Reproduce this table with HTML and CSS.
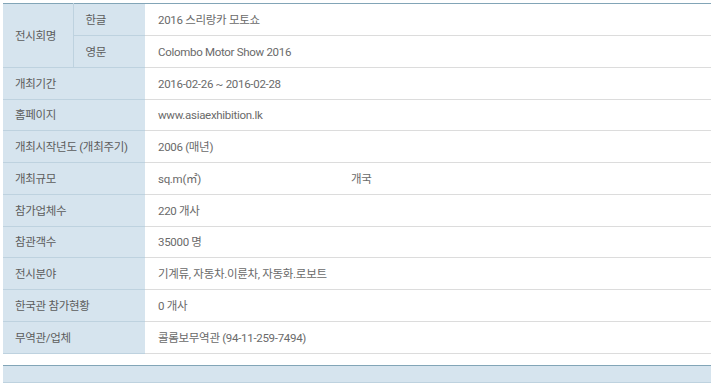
FILE: index.html
```html
<!DOCTYPE html>
<html lang="ko">
<head>
<meta charset="utf-8">
<title>전시회 정보</title>
<link rel="stylesheet" href="styles.css">
</head>
<body>
<div class="wrap">
  <table class="info">
    <colgroup>
      <col class="c1"><col class="c2"><col>
    </colgroup>
    <tbody>
      <tr>
        <th rowspan="2" class="main">전시회명</th>
        <th class="sub first">한글</th>
        <td>2016 스리랑카 모토쇼</td>
      </tr>
      <tr>
        <th class="sub">영문</th>
        <td>Colombo Motor Show 2016</td>
      </tr>
      <tr><th colspan="2">개최기간</th><td>2016-02-26 ~ 2016-02-28</td></tr>
      <tr class="short"><th colspan="2">홈페이지</th><td>www.asiaexhibition.lk</td></tr>
      <tr><th colspan="2">개최시작년도 (개최주기)</th><td>2006 (매년)</td></tr>
      <tr><th colspan="2">개최규모</th><td><div class="scale"><span class="area">sq.m(㎡)</span><span>개국</span></div></td></tr>
      <tr><th colspan="2">참가업체수</th><td>220 개사</td></tr>
      <tr class="short"><th colspan="2">참관객수</th><td>35000 명</td></tr>
      <tr><th colspan="2">전시분야</th><td>기계류, 자동차.이륜차, 자동화.로보트</td></tr>
      <tr><th colspan="2">한국관 참가현황</th><td>0 개사</td></tr>
      <tr><th colspan="2">무역관/업체</th><td>콜롬보무역관 (94-11-259-7494)</td></tr>
    </tbody>
  </table>
  <div class="footer-bar"></div>
</div>
</body>
</html>
```
FILE: styles.css
```css
html, body {
  margin: 0;
  padding: 0;
  background: #ffffff;
}
.wrap {
  padding: 3px 3px 0 3px;
  width: 708px;
  font-family: "Roboto", "Noto Sans CJK KR", sans-serif;
  font-size: 11.5px;
  letter-spacing: -0.3px;
  color: #6a6a6a;
}
.info {
  width: 708px;
  border-collapse: collapse;
  table-layout: fixed;
  border-top: 1px solid #82a5b7;
}
.info col.c1 { width: 70px; }
.info col.c2 { width: 72px; }
.info th,
.info td {
  height: 31px;
  padding: 0;
  border-bottom: 1px solid #dcdcdc;
  text-align: left;
  font-weight: normal;
  vertical-align: middle;
  white-space: nowrap;
  line-height: 16px;
}
.info tr.short th,
.info tr.short td {
  height: 30px;
}
.info th {
  background: #d6e4ee;
  color: #5c5c5c;
  padding-left: 12px;
  border-bottom-color: #bed2df;
}
.info th.main {
  border-right: 1px solid #bed2df;
  padding-left: 12px;
}
.info th.sub {
  padding-left: 12px;
}
.info td {
  padding-left: 13px;
}
.scale {
  display: flex;
}
.scale .area {
  width: 193px;
}
.footer-bar {
  margin-top: 11px;
  height: 16px;
  background: #d6e4ee;
  border-top: 1px solid #82a5b7;
  border-bottom: 1px solid #bed2df;
}
```
